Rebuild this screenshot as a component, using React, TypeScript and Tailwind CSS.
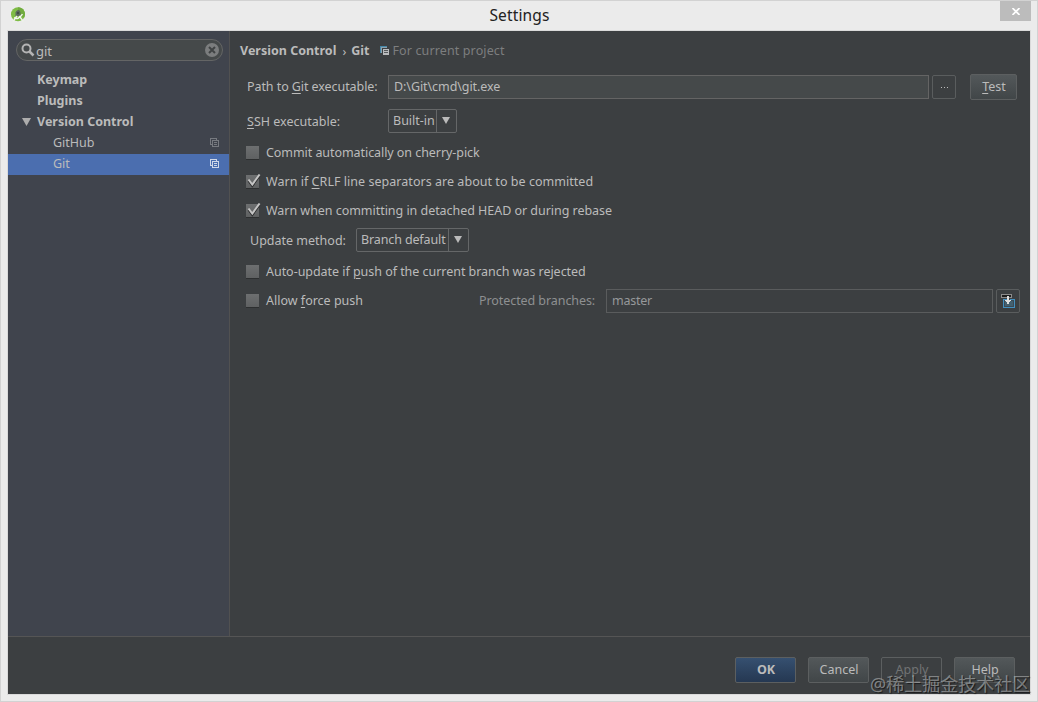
import type { ReactNode } from "react";
import clsx from "clsx";

const ScopeIcon = ({ className }: { className?: string }) => (
  <svg width="9" height="9" viewBox="0 0 9 9" fill="none" stroke="currentColor" className={className} shapeRendering="crispEdges">
    <path d="M2 6.5H.5V.5h6V2" />
    <path d="M2.5 2.5h6v6h-6zM4 4.5h3M4 6.5h3" />
  </svg>
);

const ProjectIcon = () => (
  <svg width="9" height="9" viewBox="0 0 9 9" shapeRendering="crispEdges" className="relative -top-px">
    <path d="M0 0h7v1H1v6H0z" fill="#4587a8" />
    <path d="M1 1h6v1H2v5H1z" fill="#8fa3ae" />
    <path d="M3 3h6v6H3z" fill="#b9bbbd" />
    <path d="M4 4.5h4M4 6.5h4" stroke="#55595c" />
  </svg>
);

const AppIcon = () => (
  <svg width="16" height="16" viewBox="0 0 16 16">
    <circle cx="8" cy="7.2" r="7" fill="#7fbc45" />
    <path d="M8 .2a7 7 0 0 1 6 10.5L8 7z" fill="#71ac3e" />
    <path d="M5.5 5.5Q6 3.6 8 3t2.5 2.5V9h-5z" fill="#5c6b5c" />
    <path d="M7 9 2.8 14.6M9.2 9l4.3 5.6" stroke="#eef3e9" strokeWidth="1.5" />
    <path d="M4 10.6q4 3 8.5-3.4" stroke="#f4f7f1" strokeWidth="1.4" fill="none" />
    <circle cx="8" cy="6" r="1" fill="#39453c" />
  </svg>
);

const ImportIcon = () => (
  <svg width="14" height="14" viewBox="0 0 14 14" shapeRendering="crispEdges">
    <path d="M2.5 5.5h11v8h-11z" fill="#3c4a54" stroke="#4390c0" />
    <path d="M4 7h8v5H4z" fill="#44606f" />
    <path d="M8 5h1v2H8z" fill="#3c3f41" />
    <path d="M.5.5h10v3H.5z" fill="#1e1e1e" stroke="#8c8c8c" />
    <path d="M6 2h2v4h2v1H9v1H8v2H6V8H5V7H4V6h2z" fill="#dedede" />
  </svg>
);

const Mnemonic = ({ children }: { children: ReactNode }) => (
  <span className="underline decoration-1 underline-offset-2">{children}</span>
);

const Arrow = () => (
  <svg width="8" height="7" viewBox="0 0 8 7" fill="#bbbbbb">
    <path d="M0 0h8L4 7z" />
  </svg>
);

const Checkbox = ({ checked, className, children }: { checked?: boolean; className?: string; children: ReactNode }) => (
  <label className="flex h-[29px] items-center">
    <span className="mr-[7px] h-[14px] w-[13px] border-b border-[#2d2f30] bg-linear-to-b from-[#6d6f70] to-[#5f6162]">
      {checked && (
        <svg width="16" height="14" viewBox="0 0 16 14" fill="none" className="relative -top-px">
          <path d="M2.5 7 6.3 12 13.6 2" stroke="#2c2d2e" strokeWidth="2" />
          <path d="M2.5 5.5 6.3 10.5 13.6 .5" stroke="#c4c4c4" strokeWidth="2" />
        </svg>
      )}
    </span>
    <span className={className}>{children}</span>
  </label>
);

const Select = ({ value, className }: { value: string; className: string }) => (
  <div className={clsx("flex h-6 items-stretch rounded-xs border border-[#656768]", className)}>
    <span className="flex-1 pl-1 leading-[21px] whitespace-nowrap">{value}</span>
    <span className="flex w-5 items-center justify-center border-l border-[#656768] pr-px pb-px">
      <Arrow />
    </span>
  </div>
);

const Button = ({ variant = "default", className, children }: { variant?: "default" | "primary" | "disabled"; className?: string; children: ReactNode }) => (
  <button
    className={clsx(
      "h-[26px] rounded-xs border border-[#5c5f60] pb-px pl-px",
      variant === "default" && "bg-linear-to-b from-[#53585a] to-[#414648]",
      variant === "primary" && "bg-linear-to-b from-[#365070] to-[#253852] font-bold",
      variant === "disabled" && "text-[#717374]",
      className ?? "w-[61px]"
    )}>
    {children}
  </button>
);

const tree = [
  { label: "Keymap" },
  { label: "Plugins" },
  { label: "Version Control", open: true },
  { label: "GitHub", child: true },
  { label: "Git", child: true, selected: true },
];

const Sidebar = () => (
  <aside className="w-[222px] shrink-0 border-r border-[#515151] bg-[#40444d] pt-2">
    <div className="mx-2 flex h-[22px] w-[207px] items-center rounded-full border border-[#646565] bg-[#45494a] pr-[3px] pl-1">
      <svg width="14" height="14" viewBox="0 0 14 14" fill="none" stroke="#b4b4b4">
        <circle cx="5.5" cy="5.5" r="4" strokeWidth="2" />
        <path d="m8.5 8.5 4 4" strokeWidth="2.5" />
      </svg>
      <span className="ml-px flex-1 pt-px text-[13px]">git</span>
      <svg width="14" height="14" viewBox="0 0 14 14">
        <circle cx="7" cy="7" r="7" fill="#7b7d7e" />
        <path d="m4 4 6 6M10 4l-6 6" stroke="#404344" strokeWidth="2" />
      </svg>
    </div>
    <ul className="mt-[9px]">
      {tree.map((node) => (
        <li
          key={node.label}
          className={clsx(
            "flex h-[21px] items-center pr-2.5 pb-0.5",
            node.child ? "pl-[45px]" : "font-bold",
            !node.child && !node.open && "pl-[29px]",
            node.open && "pl-3.5",
            node.selected && "bg-[#4b6eaf]"
          )}>
          {node.open && (
            <svg width="9" height="8" viewBox="0 0 9 8" fill="#adadad" className="mr-1.5">
              <path d="M0 0h9L4.5 8z" />
            </svg>
          )}
          <span className="flex-1">{node.label}</span>
          {node.child && <ScopeIcon className={node.selected ? "text-[#d0d8e8]" : "text-[#777a80]"} />}
        </li>
      ))}
    </ul>
  </aside>
);

const GitSettings = () => (
  <main className="flex-1 pt-2.5 pl-2.5">
    <div className="flex h-5 items-center">
      <b>Version Control</b>
      <span className="mr-[5px] ml-1.5 pt-px">›</span>
      <b className="mr-2.5">Git</b>
      <ProjectIcon />
      <span className="ml-1 tracking-[0.01em] text-[#7c7e7f]">For current project</span>
    </div>
    <div className="mt-[13px] flex h-[26px] items-center pl-[7px]">
      <span className="w-[141px] tracking-[-0.006em]">Path to <Mnemonic>G</Mnemonic>it executable:</span>
      <div className="h-6 w-[541px] border border-[#646464] bg-[#45494a] pl-[5px] leading-[21px] tracking-[-0.006em]">D:\Git\cmd\git.exe</div>
      <button className="ml-[3px] flex h-6 w-6 items-center justify-center gap-0.5 rounded-xs border border-[#5a5d5e]">
        <i className="h-px w-px bg-[#bbb]" />
        <i className="h-px w-px bg-[#bbb]" />
        <i className="h-px w-px bg-[#bbb]" />
      </button>
      <Button className="ml-3.5 w-[47px]"><Mnemonic>T</Mnemonic>est</Button>
    </div>
    <div className="mt-[9px] flex h-6 items-center pl-[7px]">
      <span className="w-[141px] pt-0.5"><Mnemonic>S</Mnemonic>SH executable:</span>
      <Select value="Built-in" className="w-[69px]" />
    </div>
    <div className="mt-[5px] pl-1.5">
      <Checkbox className="tracking-[-0.005em]">Commit automatically on cherry-pick</Checkbox>
      <Checkbox checked className="tracking-[0.003em]">Warn if <Mnemonic>C</Mnemonic>RLF line separators are about to be committed</Checkbox>
      <Checkbox checked className="tracking-[-0.003em]">Warn when committing in detached HEAD or during rebase</Checkbox>
      <div className="mt-[3px] mb-[5px] flex h-6 items-center pl-1">
        <span className="w-[106px] pt-0.5">Update method:</span>
        <Select value="Branch default" className="w-[113px] tracking-[-0.01em]" />
      </div>
      <Checkbox className="tracking-[-0.003em]">Auto-update if <Mnemonic>p</Mnemonic>ush of the current branch was rejected</Checkbox>
      <div className="flex h-[29px] items-center">
        <div className="w-[233px]"><Checkbox>Allow <Mnemonic>f</Mnemonic>orce push</Checkbox></div>
        <span className="w-[127px] tracking-[-0.006em] text-[#8e9091]">Protected branches:</span>
        <div className="h-6 w-[387px] border border-[#5a5c5d] pl-[5px] leading-[21px] tracking-[-0.02em] text-[#96989a]">master</div>
        <button className="ml-[3px] flex h-6 w-6 items-center justify-center rounded-xs border border-[#5a5d5e]">
          <ImportIcon />
        </button>
      </div>
    </div>
  </main>
);

export default function App() {
  return (
    <div className="relative flex h-[702px] w-[1038px] flex-col overflow-hidden border border-[#d2d2d2] bg-[#ebebeb] font-['Noto_Sans','Noto_Sans_CJK_SC',sans-serif] text-[12.5px] leading-5 text-[#bbbbbb]">
      <header className="flex h-[29px] shrink-0 justify-between pl-[9px] pr-1.5">
        <div className="w-[31px] pt-1.5"><AppIcon /></div>
        <h1 className="pt-1 pr-0.5 text-[15.5px] tracking-[0.01em] text-[#222]">Settings</h1>
        <button className="flex h-5 w-[31px] items-center justify-center bg-[#bcbcbc]">
          <svg width="8" height="7" viewBox="0 0 8 7" stroke="#fff" strokeWidth="1.7"><path d="m.5 0 7 7M7.5 0l-7 7" /></svg>
        </button>
      </header>
      <div className="mx-1.5 flex h-[665px] w-[1024px] flex-col border border-[#dadada] bg-[#3c3f41]">
        <div className="flex h-[605px] shrink-0">
          <Sidebar />
          <GitSettings />
        </div>
        <footer className="flex flex-1 justify-end gap-3 border-t border-[#555555] pt-5 pr-[15px]">
          <Button variant="primary">OK</Button>
          <Button>Cancel</Button>
          <Button variant="disabled">Apply</Button>
          <Button>Help</Button>
        </footer>
      </div>
      <span className="absolute top-[671px] left-[869px] text-[18px] leading-6 whitespace-nowrap text-white/40 [text-shadow:1px_1px_1px_#0009]">@稀土掘金技术社区</span>
    </div>
  );
}
